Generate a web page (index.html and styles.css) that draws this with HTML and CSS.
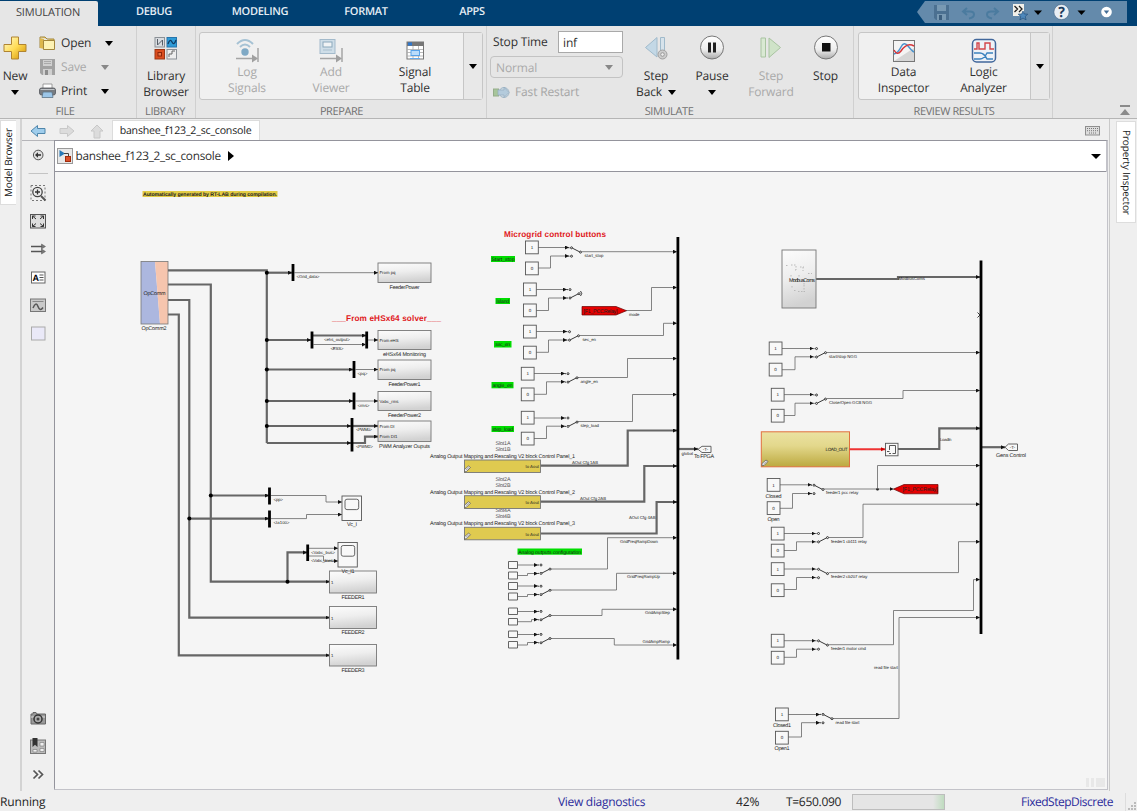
FILE: index.html
```html
<!DOCTYPE html>
<html lang="en">
<head>
<meta charset="utf-8">
<title>banshee_f123_2_sc_console</title>
<link rel="stylesheet" href="styles.css">
</head>
<body>
<div class="app">
<header class="tabs">
  <div class="tab active">SIMULATION</div><div class="tab t-debug">DEBUG</div><div class="tab t-model">MODELING</div><div class="tab t-format">FORMAT</div><div class="tab t-apps">APPS</div>
  <svg class="quick" width="212" height="24" viewBox="917 0 212 24">
    <path d="M917 12 925 1H1127V23H925Z" fill="#648aab"/>
    <path d="M934 5h15v15h-13l-2-2z" fill="#4b7091"/><path d="M937 5h9v6h-9zM937 14h9v6h-9z" fill="#7899b3"/><path d="M939 15h3v5h-3z" fill="#3b5e7e"/>
    <path d="M967 8l-4 3.500 4 3.500M963 11.500h7q4 0 4 3t-5 4" fill="none" stroke="#4b7b9f" stroke-width="2"/>
    <path d="M994 8l4 3.500-4 3.500M998 11.500h-7q-4 0-4 3t5 4" fill="none" stroke="#4b7b9f" stroke-width="2"/>
    <path d="M1013 4h11v12h-11z" fill="#f2f1ea"/><path d="M1014.500 6l3 3-3 3M1019 6l3 3-3 3" fill="none" stroke="#222" stroke-width="1.300"/><path d="M1023 11l1.300 3 3.500.2-2.600 2.200.9 3.500-3.100-1.900-3.100 1.900.9-3.500-2.600-2.200 3.500-.2z" fill="#4e88bb" stroke="#24527e" stroke-width=".7"/>
    <path d="M1034 10.500h8l-4 4.500z" fill="#000"/>
    <circle cx="1061.500" cy="12" r="7.600" fill="#e9eef4" stroke="#38597a" stroke-width=".5"/><text x="1061.500" y="17" class="help">?</text>
    <path d="M1077.500 10.500h8l-4 4.500z" fill="#000"/>
    <circle cx="1106.500" cy="12" r="5.300" fill="#fff"/><path d="M1103.800 10.500h5.400l-2.700 3.500z" fill="#426d96"/>
  </svg>
</header>

<section class="ribbon">
  <div class="group g-file">
    <div class="content">
      <div class="big new">
        <svg width="24" height="26" viewBox="0 0 24 26"><defs><linearGradient id="gold" x2="1" y2="1"><stop stop-color="#fffbd1"/><stop offset=".5" stop-color="#ffdc55"/><stop offset="1" stop-color="#d08c00"/></linearGradient></defs><path d="M8.500 2h7v7.500H23v7h-7.500V24h-7v-7.500H1v-7h7.500z" fill="url(#gold)" stroke="#b08431"/></svg>
        <span class="lbl-new">New</span><i class="caret"></i>
      </div>
      <div class="rows">
        <div class="row"><svg width="17" height="16" viewBox="0 0 17 16"><path d="M1 2h5l2 2h7v2M1 2v11" fill="#e8c964" stroke="#a3873d"/><path d="M1 3l4 1v10l-4-1z" fill="#dcb64b"/><path d="M4.500 5.500h11v9h-11z" fill="#fdf2b4" stroke="#a3873d"/></svg><span>Open</span><i class="caret open"></i></div>
        <div class="row off"><svg width="17" height="16" viewBox="0 0 17 16"><path d="M1 0h15v16H3l-2-2z" fill="#a2a2a2"/><path d="M4 1h9v6H4zM4 10h9v6H4z" fill="#d0d0d0"/><path d="M5 2.500h7M5 4.500h7" stroke="#aaa"/><path d="M6 11h3v5H6z" fill="#8c8c8c"/></svg><span>Save</span><i class="caret"></i></div>
        <div class="row"><svg width="17" height="16" viewBox="0 0 17 16"><path d="M4 1h9v5H4z" fill="#fff" stroke="#888" stroke-width=".8"/><rect x=".5" y="5" width="16" height="7" rx="2" fill="#787c81" stroke="#53575c" stroke-width=".8"/><path d="M1.500 6.500h14" stroke="#c1c5c9"/><path d="M4 9h9l1 5.500H3z" fill="#9cc6e8" stroke="#5d7386" stroke-width=".8"/></svg><span>Print</span><i class="caret"></i></div>
      </div>
    </div>
    <div class="gname">FILE</div>
  </div>
  <div class="group g-lib">
    <div class="content">
      <div class="big">
        <svg width="24" height="26" viewBox="0 0 24 26"><rect x="1" y="2.500" width="9.500" height="9.500" fill="#d9dce0" stroke="#8c9197"/><path d="M3.500 4v6l5-5v5.500" fill="none" stroke="#565d66"/><rect x="13" y="2.500" width="9.500" height="9.500" fill="#2f9bd7" stroke="#2675ac"/><path d="M14 9q2-6 4-2t4-2" fill="none" stroke="#103c63" stroke-width="1.300"/><rect x="1" y="14.500" width="9.500" height="9.500" fill="#db4c1e" stroke="#9c3615"/><rect x="4" y="17.500" width="3.500" height="3.500" fill="#e9794c" stroke="#8c2408"/><rect x="13" y="14.500" width="9.500" height="9.500" fill="#eee" stroke="#8c9197"/><path d="M15 22v-3h3v-3h3" fill="none" stroke="#666"/></svg>
        <span>Library</span><span>Browser</span>
      </div>
    </div>
    <div class="gname">LIBRARY</div>
  </div>
  <div class="group g-prep">
    <div class="content">
      <div class="gallery">
        <div class="item w96 off"><svg width="24" height="25" viewBox="0 0 24 25"><path d="M2 6q8-8 16 0M5 9q5-5 10 0" fill="none" stroke="#a6c2d4" stroke-width="2"/><circle cx="10" cy="14" r="3.700" fill="#7fa9c5"/><path d="M1 20.500h17M23 10v14" stroke="#a5a5a5" stroke-width="1.500"/><path d="M17 16.500v8l6-4z" fill="#a0a0a0"/></svg><span>Log</span><span>Signals</span></div>
        <div class="item w72 off"><svg width="24" height="25" viewBox="0 0 24 25"><rect x="1" y="1.500" width="15" height="14" fill="#cfdee8" stroke="#a3bacb"/><rect x="4" y="4" width="9" height="5" fill="#f0f3f5" stroke="#8ba8bb"/><path d="M4 12h9" stroke="#a9bfce"/><path d="M1 20.500h17M23 10v14" stroke="#a5a5a5" stroke-width="1.500"/><path d="M17 16.500v8l6-4z" fill="#a0a0a0"/></svg><span>Add</span><span>Viewer</span></div>
        <div class="item w95"><svg width="24" height="25" viewBox="0 0 24 25"><rect x="4" y="4" width="16.500" height="17" fill="#fff" stroke="#777"/><path d="M4 4h16.500v4H4z" fill="#777"/><path d="M5 4.500h4v3H5z" fill="#2d77cf"/><path d="M4 11.500h16M4 14.500h16M4 18h16M10 8v13M15.500 8v13" stroke="#aaa" stroke-width=".8"/><rect x="8" y="12.500" width="8.500" height="5" fill="#b9dcfb" stroke="#57a2e8"/><path d="M7 20.500h10" stroke="#62a9eb"/></svg><span>Signal</span><span>Table</span></div>
        <div class="more"><i class="caret"></i></div>
      </div>
    </div>
    <div class="gname">PREPARE</div>
  </div>
  <div class="group g-sim">
    <div class="content">
      <div class="simform">
        <div class="stop"><span>Stop Time</span><div class="field">inf</div></div>
        <div class="select"><span>Normal</span><i class="caret"></i></div>
        <div class="fast"><svg width="17" height="14" viewBox="0 0 17 14"><rect x=".5" y="4" width="5" height="7" fill="#a7c59b" stroke="#95ad8a"/><ellipse cx="11" cy="7.500" rx="5" ry="5" fill="#cddbe4" stroke="#a3b8c8"/><path d="M5 5h6V2l5 5.500-5 5V10H5z" fill="#b4cbdc" stroke="#96adc0" stroke-width=".7"/></svg><span>Fast Restart</span></div>
      </div>
      <div class="big sb"><svg width="26" height="26" viewBox="0 0 26 26"><path d="M14 2.500V22L2.500 12.500z" fill="#c3d8e6" stroke="#a0bacb"/><path d="M17.500 2.500h4V20h-4z" fill="#d7e3eb" stroke="#a0bacb"/><circle cx="19.500" cy="19.500" r="4.500" fill="#ccc" stroke="#a0a0a0"/><circle cx="19.500" cy="19.500" r="1.800" fill="#eee" stroke="#999"/></svg><span>Step</span><span>Back <i class="caret"></i></span></div>
      <div class="big pa"><svg width="26" height="26" viewBox="0 0 26 26"><defs><linearGradient id="btn" x2="0" y2="1"><stop stop-color="#fff"/><stop offset=".6" stop-color="#ededed"/><stop offset="1" stop-color="#aaa"/></linearGradient></defs><circle cx="13" cy="12.500" r="11.500" fill="url(#btn)" stroke="#777"/><path d="M9 7.500h3v10H9zM14 7.500h3v10h-3z" fill="#222"/></svg><span>Pause</span><i class="caret c2"></i></div>
      <div class="big sf off"><svg width="26" height="26" viewBox="0 0 26 26"><path d="M3 3h4.500v19H3z" fill="#d9e9d3" stroke="#a9c4a1"/><path d="M11 3v19.500l11.500-10z" fill="#cfe3c8" stroke="#a9c4a1"/></svg><span>Step</span><span>Forward</span></div>
      <div class="big st"><svg width="26" height="26" viewBox="0 0 26 26"><circle cx="13" cy="12.500" r="11.500" fill="url(#btn)" stroke="#777"/><path d="M9 8h8.500v8.500H9z" fill="#111"/></svg><span>Stop</span></div>
    </div>
    <div class="gname">SIMULATE</div>
  </div>
  <div class="group g-rev">
    <div class="content">
      <div class="gallery">
        <div class="item w90"><svg width="24" height="25" viewBox="0 0 24 25"><rect x="1.500" y="2.500" width="21" height="21" fill="#f4f4f4" stroke="#777"/><path d="M2 23l20-13v13z" fill="#d6d6d6"/><path d="M2 16q4-1 7-7t7-1 6 6" fill="none" stroke="#4b93cd" stroke-width="1.500"/><path d="M2 12q3 6 7 1 6-9 13-5" fill="none" stroke="#d5363a" stroke-width="1.500"/></svg><span>Data</span><span>Inspector</span></div>
        <div class="item w70"><svg width="26" height="25" viewBox="0 0 26 25"><rect x="1.500" y="1.500" width="23" height="22.500" rx="4" fill="#eef2f7" stroke="#41679b" stroke-width="1.500"/><path d="M3 11h3V5h2v6h6V5h5v6h4" fill="none" stroke="#d2454a" stroke-width="1.400"/><path d="M3 15h6q4 0 7 6h6M3 21h6q4 0 7-6h6" fill="none" stroke="#3b83bf" stroke-width="1.400"/></svg><span>Logic</span><span>Analyzer</span></div>
        <div class="more"><i class="caret"></i></div>
      </div>
    </div>
    <div class="gname">REVIEW RESULTS</div>
  </div>
  <div class="collapse"><svg width="12" height="12" viewBox="0 0 12 12"><path d="M1 1h10v2H1zM6 5l5 6H1z" fill="#8b8b8b"/></svg></div>
</section>

<main class="body">
  <aside class="left"><div class="vtab"><span>Model Browser</span></div></aside>
  <div class="center">
    <div class="doctabs">
      <svg width="84" height="21" viewBox="28 119 84 21"><path d="M31 131l6.500-5.500v3H45v5h-7.500v3z" fill="#9fcdec" stroke="#4f86ab"/><path d="M74 131l-6.500-5.500v3H60v5h7.500v3z" fill="#dcdcdc" stroke="#c8c8c8"/><path d="M97 125l-6 6h3v7h6v-7h3z" fill="#dcdcdc" stroke="#c8c8c8"/></svg>
      <div class="doctab">banshee_f123_2_sc_console</div>
      <svg class="kbd" width="15" height="10" viewBox="0 0 15 10"><rect x=".5" y=".5" width="14" height="8.500" fill="#ddd" stroke="#8f8f8f"/><path d="M2 2.500h11M2 4.700h11M4 7h7" stroke="#777" stroke-dasharray="1 1"/></svg>
    </div>
    <div class="work">
      <nav class="palette">
        <svg width="32" height="648" viewBox="22 141 32 648">
          <circle cx="38.200" cy="155" r="4.800" fill="#e0e0e0" stroke="#555"/><path d="M41 155h-4" stroke="#333" stroke-width="1.600"/><path d="M38 152.300v5.400l-3-2.700z" fill="#333"/>
          <path d="M28.500 173.500H48" stroke="#c4c4c4"/>
          <rect x="31" y="185.500" width="14" height="15" fill="none" stroke="#777" stroke-dasharray="2 2"/><circle cx="37.500" cy="192" r="4.700" fill="#eee" stroke="#444" stroke-width="1.300"/><path d="M35 192h5M37.500 189.500v5" stroke="#333" stroke-width="1.300"/><path d="M41 196l4.500 4.500" stroke="#555" stroke-width="2"/>
          <rect x="30.500" y="214.500" width="15" height="13.500" fill="#dedede" stroke="#555"/><path d="M32.500 219v-3h3M32.500 216l3.500 3M43.500 219v-3h-3M43.500 216l-3.500 3M32.500 223.500v3h3M32.500 226.500l3.500-3M43.500 223.500v3h-3M43.500 226.500l-3.500-3" fill="none" stroke="#333"/>
          <path d="M31 246.500h12M31 251.500h12" stroke="#555" stroke-width="1.300"/><path d="M41.500 244l4 2.500-4 2.500zM41.500 249l4 2.500-4 2.500z" fill="#777" stroke="#555" stroke-width=".5"/>
          <rect x="31.500" y="272" width="13.500" height="11" fill="#fff" stroke="#666"/><text x="32.500" y="281" class="ia">A</text><path d="M39.500 275h4M39.500 277.500h4M39.500 280h4" stroke="#555"/>
          <rect x="30.500" y="299" width="15" height="12.500" fill="#c9c9c9" stroke="#777"/><path d="M32.500 301.500h11" stroke="#888"/><path d="M33 308q3-7 5-1.500t5 1" fill="none" stroke="#555" stroke-width="1.500"/>
          <rect x="31.500" y="327" width="13.500" height="13" fill="#eae9f8" stroke="#aaa"/>
          <path d="M31 714h2v-1.500h3l1 1.500h8.500v10H31z" fill="#999" stroke="#666"/><path d="M31 717h14" stroke="#ddd"/><circle cx="38" cy="719" r="4" fill="#aaa" stroke="#333" stroke-width="1.500"/><circle cx="38" cy="719" r="1.500" fill="#444"/>
          <rect x="30.500" y="740" width="15" height="13.500" fill="#bbb" stroke="#777"/><path d="M40 742.500h4v3.500h-4zM40 748.500h4v3h-4zM33 749.500h4v2.500h-4z" fill="#eee" stroke="#777" stroke-width=".6"/><path d="M32.500 738h5v9l-2.500-2.300-2.500 2.300z" fill="#333"/>
          <path d="M33.500 770.500l4 4-4 4M38.500 770.500l4 4-4 4" fill="none" stroke="#555" stroke-width="1.700"/>
        </svg>
      </nav>
      <div class="editor">
        <div class="crumb"><svg width="16" height="16" viewBox="0 0 16 16"><rect x=".5" y=".5" width="15" height="15" fill="#e9e9e9" stroke="#999"/><path d="M2.500 2v7l5.500-3.500z" fill="#2679b7"/><path d="M7 5.500h4.500V9" fill="none" stroke="#444"/><rect x="8.500" y="8.500" width="5" height="5" fill="#d9502a" stroke="#a02c0d"/></svg><span>banshee_f123_2_sc_console</span><svg width="6" height="10" viewBox="0 0 6 10"><path d="M0 0l6 5-6 5z"/></svg><i class="caret wide"></i></div>
        <svg class="canvas" width="1052" height="617" viewBox="55 172 1052 617">
          <defs>
            <marker id="a" markerUnits="userSpaceOnUse" markerWidth="5" markerHeight="5" refX="4" refY="2" orient="auto"><path d="M0 0l4 2-4 2z" fill="#111"/></marker>
            <marker id="ar" markerUnits="userSpaceOnUse" markerWidth="5" markerHeight="5" refX="4" refY="2" orient="auto"><path d="M0 0l4 2-4 2z" fill="#c00"/></marker>
            <linearGradient id="blk" x2=".2" y2="1"><stop stop-color="#fcfcfc"/><stop offset=".5" stop-color="#eee"/><stop offset="1" stop-color="#d2d2d2"/></linearGradient>
            <linearGradient id="yel" x2="0" y2="1"><stop stop-color="#ebe2a2"/><stop offset=".4" stop-color="#e3d88c"/><stop offset="1" stop-color="#bca93f"/></linearGradient>
            <g id="c1"><rect width="12.800" height="12.800" class="k"/><text x="6.400" y="8" class="n">1</text></g>
            <g id="c0"><rect width="12.800" height="12.800" class="k"/><text x="6.400" y="8" class="n">0</text></g>
            <g id="su" class="s"><path d="M-3 0h1M-3 8.400h1M1 .4L8 4"/><circle r="1"/><circle cy="8.400" r="1"/><circle cx="9" cy="4.300" r="1"/></g>
            <g id="sd" class="s"><path d="M-3 0h1M-3 8.400h1M1 8L8 4.400"/><circle r="1"/><circle cy="8.400" r="1"/><circle cx="9" cy="4.100" r="1"/></g>
            <g id="pen"><path d="M0 3.500L4 0l2 1.500-4 4-2 .3z" fill="#eee" stroke="#555" stroke-width=".7"/><path d="M1.500 4l3-2.500" stroke="#777" stroke-width=".6"/></g>
          </defs>

          <rect x="142.500" y="191" width="135" height="6" fill="#e3cc45"/>
          <text x="143" y="196" textLength="134" class="b">Automatically generated by RT-LAB during compilation.</text>

          <path d="M141 261.500h14l5 62.500h-19z" fill="#acb7df"/><path d="M155 261.500h13V324h-8z" fill="#f6c5ae"/><rect x="141" y="261.500" width="27" height="62.500" fill="none" stroke="#777" stroke-width=".8"/>
          <text x="154.500" y="295" textLength="22" class="m">OpComm</text><text x="154" y="330" textLength="25" class="m">OpComm2</text>

          <g class="bus">
            <path d="M168 270.300H266.800V443"/>
            <path class="e" d="M266.800 272.700H292"/><path class="e" d="M266.800 340H311"/><path class="e" d="M266.800 369.500H353"/><path class="e" d="M266.800 401H353"/><path class="e" d="M266.800 426H351"/><path class="e" d="M266.800 443H351"/>
            <path class="e" d="M168 284.500H210.800V581.700H329.500"/><path class="e" d="M168 300H189.300V617.600H329.500"/><path class="e" d="M168 314.500H178.800V655.300H329.500"/>
            <path class="e" d="M210.800 495.500H269"/><path class="e" d="M189.300 518.600H269"/><path class="e" d="M287.500 581.700V552.400H307"/>
            <path class="e" d="M313 335.500H366"/><path class="e" d="M353 426H378"/><path class="e" d="M353 443H365V436.600H378"/>
            <path class="e" d="M540.500 465.700H627.700V430.500H677"/><path class="e" d="M540.500 501.700H644.300V466H677"/><path class="e" d="M540.500 533.500H656.600V502H677"/><path class="e" d="M679 449H698"/>
            <path class="e" d="M816 279H898V277H980"/><path class="e" d="M898 449H939.300V428.300H980"/><path class="e" d="M982 447.200H1005"/>
          </g>
          <g class="dot"><circle cx="266.800" cy="272.700" r="2"/><circle cx="266.800" cy="340" r="2"/><circle cx="266.800" cy="369.500" r="2"/><circle cx="266.800" cy="401" r="2"/><circle cx="266.800" cy="426" r="2"/><circle cx="210.800" cy="495.500" r="2"/><circle cx="189.300" cy="518.600" r="2"/><circle cx="287.500" cy="581.700" r="2"/><circle cx="877.500" cy="489.200" r="1.300"/></g>
          <path class="bar" d="M293 264v17M312 331.500v17M366.700 331.500v17M354 361v17M354 392.500v17M352 418v33.500M269.500 487.500v17M269.500 510.500v17M307.700 544.500v16.500M677.900 237v422.500M981 260.500V634"/>

          <g class="blk"><rect x="378" y="263" width="53" height="19.500"/><rect x="378" y="330.500" width="53" height="19"/><rect x="378" y="360" width="53" height="19.500"/><rect x="378" y="391.500" width="53" height="19"/><rect x="378" y="421" width="53" height="20.500"/><rect x="329.500" y="571" width="47" height="22"/><rect x="329.500" y="606.500" width="47" height="22"/><rect x="329.500" y="644.500" width="47" height="21.500"/><rect x="782" y="250" width="34" height="58"/></g>
          <path d="M786 265.500h2M791 265h5v5M803 267v4M800 267h4M808 273.500h4M795 270h1M799 275v2M791 275v2M804 280v5M795 279v3M792 286v2M804 285v7M794 290.500h3M798 291.500h7" fill="none" stroke="#b4b4b4" stroke-width=".9" stroke-dasharray="1.500 1.500"/>

          <g class="w">
            <path d="M294 272.700H378"/><path d="M313 344.500H366"/><path d="M368 340H378"/><path d="M355 369.500H378"/><path d="M355 401H378"/>
            <path d="M271 495.500H326V502H342"/><path d="M271 518.600H306.500V514.500H342"/><path d="M309 548.300H338"/><path d="M309 556H323.500V561H338"/>
            <path d="M538 247.500H569"/><path d="M538 268H550.500V256H569"/><path d="M582 251.700H677"/>
            <path d="M536 289.500H567"/><path d="M536 310.500H548.500V298H567"/><path d="M626 310.500H651.500V287.500H677"/>
            <path d="M536 331.500H567"/><path d="M536 352.300H548.500V340H567"/><path d="M580 335.500H663.500V323.300H677"/>
            <path d="M534 373.500H565"/><path d="M534 394.300H546.500V381.800H565"/><path d="M578 377.500H627.500V358.500H677"/>
            <path d="M534 418H565"/><path d="M534 438.500H546.500V426.200H565"/><path d="M578 421.500H632.500V394.500H677"/>
            <path d="M517.500 565H538"/><path d="M517.500 575.500H527.500V573.500H538"/><path d="M551 569H607.500V537.700H677"/>
            <path d="M517.500 586H538"/><path d="M517.500 596.500H527.500V594.500H538"/><path d="M551 590H616.500V573.300H677"/>
            <path d="M517.500 611.500H538"/><path d="M517.500 621.700H531.500V619.600H538"/><path d="M551 615.500H602V609.300H677"/>
            <path d="M517.500 634.500H538"/><path d="M517.500 645H527.500V642.500H538"/><path d="M551 638.500H614.300V645H677"/>
            <path d="M782 348.500H813.500"/><path d="M782 369.700H795V356.800H813.500"/><path d="M827 352.500H980"/>
            <path d="M784 394.600H813.500"/><path d="M784 415.500H795V403.200H813.500"/><path d="M827 398.500H903V390.500H980"/>
            <path d="M780 484.800H811.500"/><path d="M780 508.300H792.500V493.500H811.500"/><path d="M824 489H893.500"/><path d="M877.500 489V465.500H980"/>
            <path d="M784 533.500H815.500"/><path d="M784 550.500H796.500V541.800H815.500"/><path d="M829 537.500H863V504.200H980"/>
            <path d="M784 569H815.500"/><path d="M784 589.500H796.500V577.500H815.500"/><path d="M829 572.600H958.500V541.700H980"/>
            <path d="M784 640.700H815.500"/><path d="M784 657.300H796.500V649.200H815.500"/><path d="M829 644.700H893.500V610.500H973.500V579.600H980"/>
            <path d="M788 714.500H820"/><path d="M788 737H801.500V722.700H820"/><path d="M833 718.500H899V617.500H980"/>
          </g>

          <use href="#c1" x="525.500" y="241"/><use href="#c0" x="525.500" y="262"/><use href="#c1" x="523.500" y="283"/><use href="#c0" x="523.500" y="304"/><use href="#c1" x="523.500" y="325.200"/><use href="#c0" x="523.500" y="346.200"/><use href="#c1" x="521.300" y="367.300"/><use href="#c0" x="521.300" y="388"/><use href="#c1" x="521.300" y="411.300"/><use href="#c0" x="521.300" y="432.200"/>
          <use href="#c1" x="769.200" y="342"/><use href="#c0" x="769.200" y="363.200"/><use href="#c1" x="771.300" y="388.300"/><use href="#c0" x="771.300" y="409.300"/><use href="#c1" x="767.200" y="478.500"/><use href="#c0" x="767.200" y="501.700"/><use href="#c1" x="771.300" y="527.200"/><use href="#c0" x="771.300" y="544.200"/><use href="#c1" x="771.300" y="562.700"/><use href="#c0" x="771.300" y="583.800"/><use href="#c1" x="771.300" y="634.300"/><use href="#c0" x="771.300" y="651.300"/><use href="#c1" x="775.500" y="708"/><use href="#c0" x="775.500" y="731.300"/>
          <path class="k" d="M508.500 561.500h9v7h-9zM508.500 572h9v7h-9zM508.500 582.500h9v7h-9zM508.500 593h9v7h-9zM508.500 608h9v6.500h-9zM508.500 618.500h9v6.500h-9zM508.500 631h9v6.500h-9zM508.500 641.500h9v6.500h-9z"/>
          <use href="#su" x="571.500" y="247.800"/><use href="#sd" x="570" y="289.600"/><use href="#sd" x="569.500" y="331.700"/><use href="#sd" x="568" y="373.700"/><use href="#sd" x="568" y="418"/>
          <use href="#sd" x="541" y="565"/><use href="#sd" x="541" y="586.200"/><use href="#sd" x="541" y="611.400"/><use href="#sd" x="541" y="634.400"/>
          <use href="#sd" x="816.500" y="348.600"/><use href="#sd" x="816.500" y="395"/><use href="#su" x="814" y="485.200"/><use href="#sd" x="818.500" y="533.500"/><use href="#su" x="818.500" y="569.300"/><use href="#su" x="818.500" y="640.800"/><use href="#su" x="823" y="714.400"/>
          <path class="s" d="M580.500 291q2.500 2.500 0 5M977.500 312.500l2.500 2.500-2.500 2.500"/>

          <text x="332" y="320.500" textLength="109" class="h">___From eHSx64 solver___</text><text x="504" y="236.500" textLength="102" class="h">Microgrid control buttons</text>

          <g class="p"><text x="379.500" y="274.300" textLength="16">From pq</text><text x="379.500" y="341.500" textLength="19">From eHS</text><text x="379.500" y="371.300" textLength="16">From pq</text><text x="379.500" y="403" textLength="19">Vabc_rms</text><text x="379.500" y="427.700" textLength="15">From DI</text><text x="379.500" y="438" textLength="18">From DI1</text><text x="331" y="583.500">1</text><text x="331" y="619.500">1</text><text x="331" y="657">1</text>
            <text x="296.500" y="277.500" textLength="23">&lt;Grid_data&gt;</text><text x="324" y="341" textLength="26">&lt;ehs_output&gt;</text><text x="330.500" y="349.500" textLength="13">&lt;ESS&gt;</text><text x="357.500" y="375" textLength="10">&lt;pq&gt;</text><text x="357.500" y="406.500" textLength="12">&lt;rms&gt;</text><text x="356" y="431" textLength="16">&lt;PWM0&gt;</text><text x="356" y="448" textLength="17">&lt;PWM2&gt;</text>
            <text x="273.500" y="501" textLength="9.500">&lt;pp&gt;</text><text x="273.500" y="524" textLength="16">&lt;Ia100&gt;</text><text x="311" y="553.700" textLength="24">&lt;Vabc_bus&gt;</text><text x="311" y="561.500" textLength="24">&lt;Vabc_lines&gt;</text>
            <text x="584.500" y="256.500" textLength="19">start_stop</text><text x="629" y="315.800" textLength="10.500">mode</text><text x="582.500" y="340.500" textLength="13.500">sec_en</text><text x="580.500" y="383.300" textLength="17.500">angle_en</text><text x="580.500" y="427.300" textLength="18.500">step_load</text>
            <text x="572" y="464" textLength="26">AOut Cfg 1AB</text><text x="580" y="500" textLength="26">AOut Cfg 2AB</text><text x="629" y="519.300" textLength="26.500">AOut Cfg 4AB</text><text x="620" y="543" textLength="38">GridFreqRampDown</text><text x="627" y="578.300" textLength="33">GridFreqRampUp</text><text x="645" y="614.300" textLength="25">GridAmpStep</text><text x="642.500" y="643" textLength="27.500">GridAmpRamp</text><text x="681.500" y="454.500" textLength="11.500">global</text>
            <text x="898.500" y="279.800" textLength="26.500">ModbusComs</text><text x="829" y="357.500" textLength="28">start/stop NGG</text><text x="829" y="403.700" textLength="43">Close/Open GCB NGG</text><text x="940" y="440.800" textLength="11.500">LoadIn</text><text x="826" y="494.300" textLength="32.500">feeder1 pcc relay</text><text x="831" y="543" textLength="36">feeder1 cb111 relay</text><text x="831" y="578.300" textLength="36.500">feeder2 cb207 relay</text><text x="831" y="650.300" textLength="35">feeder1 motor cmd</text><text x="874" y="669.300" textLength="24">read file start</text><text x="835.500" y="723.800" textLength="24">read file start</text></g>

          <g class="m"><text x="404.500" y="289" textLength="30">FeederPower</text><text x="404.500" y="355.800" textLength="43">eHSx64 Monitoring</text><text x="404.500" y="385.500" textLength="32">FeederPower1</text><text x="404.500" y="416.700" textLength="33">FeederPower2</text><text x="404.500" y="448" textLength="51">PWM Analyzer Ouputs</text><text x="352" y="526.300" textLength="10">Vc_I</text><text x="348" y="572.700" textLength="13">Vc_I1</text><text x="353" y="599.200" textLength="23">FEEDER1</text><text x="353" y="634.300" textLength="23">FEEDER2</text><text x="353" y="672" textLength="23">FEEDER3</text>
            <text x="502.500" y="457.500" textLength="145">Analog Output Mapping and Rescaling V2 block Control Panel_1</text><text x="502.500" y="493.500" textLength="145">Analog Output Mapping and Rescaling V2 block Control Panel_2</text><text x="502.500" y="525" textLength="145">Analog Output Mapping and Rescaling V2 block Control Panel_3</text>
            <text x="704" y="458.300" textLength="20">To FPGA</text><text x="1011" y="457" textLength="30">Gens Control</text><text x="802" y="281.800" textLength="26">ModbusComs</text><text x="773.500" y="497.500" textLength="16">Closed</text><text x="773.500" y="520.500" textLength="12">Open</text><text x="782" y="727.300" textLength="18">Closed1</text><text x="782" y="749.500" textLength="15">Open1</text></g>
          <g class="m slot"><text x="503" y="444.800" textLength="15">Slot1A</text><text x="503" y="451" textLength="15">Slot1B</text><text x="503" y="480.700" textLength="15">Slot2A</text><text x="503" y="486.500" textLength="15">Slot2B</text><text x="503" y="512" textLength="15">Slot4A</text><text x="503" y="518.300" textLength="15">Slot4B</text></g>

          <g class="scope"><rect x="342" y="496" width="19.500" height="24.500"/><rect x="345" y="499.200" width="13.700" height="10.400" rx="2"/><rect x="338" y="542.500" width="19.300" height="24.500"/><rect x="341.200" y="545.500" width="13.500" height="10.700" rx="2"/></g>

          <g class="yb"><rect x="464.500" y="460" width="76" height="12.500"/><rect x="464.500" y="495.700" width="76" height="12.800"/><rect x="464.500" y="527.300" width="76" height="12.500"/></g>
          <g class="p"><text x="525.500" y="468.200" textLength="13.500">to Aout</text><text x="525.500" y="504" textLength="13.500">to Aout</text><text x="525.500" y="535.500" textLength="13.500">to Aout</text></g>
          <rect x="761.300" y="431.800" width="88.200" height="35" fill="url(#yel)" stroke="#e0703f"/><text x="836.500" y="451.300" textLength="22" class="lo">LOAD_OUT</text>
          <use href="#pen" x="464.500" y="466"/><use href="#pen" x="464.500" y="501.700"/><use href="#pen" x="464.500" y="533.200"/><use href="#pen" x="762" y="460"/>
          <path d="M849.500 449.300H885" stroke="#e33" stroke-width="2" marker-end="url(#ar)"/>
          <rect x="885.500" y="443.300" width="12.500" height="12.500" class="k"/><path d="M887 451.500h2.500M889.500 450v-4.500h6v8h-3M891 453.500h-2" fill="none" stroke="#444" stroke-width=".9"/>

          <g fill="#0d0"><rect x="491" y="256" width="24" height="6"/><rect x="495.500" y="298" width="14.500" height="6"/><rect x="494" y="341" width="17.500" height="6.500"/><rect x="491.500" y="382" width="22" height="6.300"/><rect x="491.500" y="426" width="22.500" height="6"/><rect x="517.500" y="548.500" width="64.500" height="6.200"/></g>
          <g class="g"><text x="503" y="260.800" textLength="23">Start_stop</text><text x="502.700" y="302.800" textLength="13">Island</text><text x="502.700" y="346" textLength="15">sec_en</text><text x="502.500" y="386.700" textLength="20">angle_en</text><text x="502.700" y="430.600" textLength="21">step_load</text><text x="549.700" y="553.500" textLength="63">Analog outputs configuration</text></g>

          <path d="M582 306.500h34l10.500 4.200-10.500 4.300h-34zM938 484.500h-34l-10.500 4.600 10.500 4.700h34z" fill="#e60000" stroke="#600" stroke-width=".7"/>
          <text x="600.500" y="312.500" textLength="34" class="m">[F1_PCCRelay]</text><text x="920" y="491" textLength="35" class="m">[F1_PCCRelay]</text>
          <path class="k" d="M711 446.300h-9l-4 3 4 3.200h9zM1017.500 444h-9l-3.500 3.200 3.500 3.300h9z"/><text x="705.500" y="451" class="n">-T-</text><text x="1012.500" y="449" class="n">-T-</text>
          <path d="M1086 778h3v9h-3zM1091 778h3v9h-3zM1096 778h9v9h-9z" fill="#e8e8e8"/>
        </svg>
      </div>
    </div>
  </div>
  <aside class="right"><div class="vtab"><span>Property Inspector</span></div></aside>
</main>

<footer class="status">
  <span class="s-run">Running</span><span class="s-diag link">View diagnostics</span><span class="s-pct">42%</span><span class="s-time">T=650.090</span><div class="progress"></div><span class="s-solver link">FixedStepDiscrete</span>
  <svg class="grip" width="12" height="18" viewBox="0 0 12 18"><path d="M.5 0v18" stroke="#ddd"/><path d="M9 9h2v2H9zM9 12h2v2H9zM6 12h2v2H6zM9 15h2v2H9zM6 15h2v2H6zM3 15h2v2H3z" fill="#bbb"/></svg>
</footer>
</div>
</body>
</html>
```

FILE: styles.css
```css
* { box-sizing: border-box; }
body { margin: 0; font: 12px/16px "Open Sans", "Noto Sans", sans-serif; letter-spacing: -.15px; color: #303030; background: #efefef; overflow: hidden; text-rendering: geometricPrecision; }
svg { display: block; flex: none; }
.app { width: 1137px; height: 811px; display: flex; flex-direction: column; }

.tabs { height: 26px; flex: none; display: flex; background: #004072; color: #e6eef5; font-size: 11px; line-height: 24px; white-space: nowrap; }
.tab { text-align: center; font-weight: 600; letter-spacing: -.3px; }
.tab.active { width: 98px; height: 25px; margin-top: 1px; background: #e6e6e6; color: #404040; font-weight: 400; border-top-right-radius: 2px; padding-right: 2px; letter-spacing: -.15px; }
.t-debug { width: 112px; }
.t-model { width: 100px; }
.t-format { width: 112px; }
.t-apps { width: 100px; }
.quick { margin-left: auto; margin-right: 8px; }
.help { font: bold 14px "Open Sans", sans-serif; text-anchor: middle; fill: #1b3a5c; }

.ribbon { height: 93px; flex: none; display: flex; background: #e6e6e6; border-bottom: 1px solid #b5b5b5; white-space: nowrap; }
.group { display: flex; flex-direction: column; position: relative; border-right: 1px solid #d0d0d0; }
.content { height: 78px; display: flex; }
.gname { text-align: center; font-size: 11px; line-height: 16px; height: 14px; color: #707070; letter-spacing: -.4px; padding-right: 2px; }
.g-file { width: 137px; }
.g-file .gname { padding-right: 6px; }
.g-lib { width: 59px; }
.g-prep { width: 291px; padding-left: 3px; }
.g-sim { width: 367px; }
.g-rev { width: 199px; padding-left: 4px; }
.off { color: #a9a9a9; }
.caret { display: inline-block; width: 0; height: 0; flex: none; border: 4px solid transparent; border-top: 5px solid #000; border-bottom: 0; }
.off .caret, .select .caret { border-top-color: #888; }
.big { display: flex; flex-direction: column; align-items: center; padding-top: 9px; width: 58px; line-height: 16px; }
.big svg { margin-bottom: 7px; }
.big .caret { margin-left: 3px; vertical-align: 1px; }
.big .c2 { margin: 6px 0 0; }
.new { width: 31px; padding-right: 1px; }
.new .caret { margin: 6px 0 0; }
.rows { padding: 5px 0 0 8px; }
.row { height: 24px; display: flex; align-items: center; }
.row span { width: 44px; padding-left: 5px; }
.row .caret { margin-left: 1px; }
.row .open { margin-left: 5px; }
.gallery { height: 68px; margin-top: 6px; display: flex; border: 1px solid #c6c6c6; border-radius: 3px; background: #f0f0f0; }
.item { display: flex; flex-direction: column; align-items: center; padding-top: 5px; }
.item svg { margin-bottom: 1px; }
.w96 { width: 94px; }
.w72 { width: 74px; }
.w95 { width: 94px; }
.g-prep .more { margin-left: 1px; }
.w90 { width: 89px; }
.w70 { width: 82px; padding-right: 11px; }
.more { width: 19px; border-left: 1px solid #c6c6c6; background: #e8e8e8; display: flex; align-items: center; justify-content: center; }

.simform { width: 138px; padding: 5px 2px 0 3px; }
.stop { display: flex; align-items: center; justify-content: space-between; padding-left: 3px; }
.field { width: 65px; height: 22px; background: #fff; border: 1px solid #a9a9a9; padding: 3px 4px 0; }
.select { margin-top: 3px; height: 22px; border: 1px solid #c3c3c3; border-radius: 4px; display: flex; align-items: center; justify-content: space-between; padding: 1px 9px 0 5px; color: #aaa; }
.fast { display: flex; align-items: center; gap: 5px; margin-top: 6px; padding-left: 3px; color: #a5a5a5; }
.sb { width: 62px; }
.pa { width: 50px; }
.sf { width: 68px; }
.st { width: 41px; }
.collapse { margin-left: auto; padding: 78px 6px 0 0; }

.body { height: 672px; flex: none; display: flex; }
.left { width: 22px; border-right: 2px solid #d3d3d3; padding-top: 1px; }
.vtab { width: 16px; height: 85px; background: #fff; border: 1px solid #ddd; border-left: 0; writing-mode: vertical-rl; font-size: 10px; letter-spacing: -.12px; line-height: 14px; text-align: center; color: #222; white-space: nowrap; }
.left .vtab { transform: rotate(180deg); padding-left: 2px; }
.center { width: 1086px; display: flex; flex-direction: column; }
.doctabs { height: 21px; display: flex; padding-left: 6px; }
.doctab { width: 148px; height: 20px; background: #fff; border: 1px solid #dcdcdc; border-bottom: 0; font-size: 10.6px; letter-spacing: -.2px; line-height: 20px; text-align: center; margin-top: 1px; color: #222; }
.kbd { margin: 7px 8px 0 auto; }
.work { display: flex; border-top: 1px solid #b5b5b9; height: 650px; }
.palette { width: 32px; }
.editor { width: 1054px; border: 1px solid #94949c; border-right: 2px solid #c3c3c9; border-bottom: 2px solid #c3c3c9; margin-top: -1px; }
.crumb { height: 31px; background: #fff; border-bottom: 1px solid #94949c; display: flex; align-items: center; padding: 0 5px 0 2px; }
.crumb span { padding: 0 7px 0 3px; font-size: 11.8px; letter-spacing: -.28px; }
.crumb .wide { margin-left: auto; border-width: 5px 5px 0; }
.right { width: 29px; border-left: 1px solid #c9c9c9; margin-left: 1px; padding: 2px 0 0 6px; }
.right .vtab { width: 20px; height: 102px; border: 1px solid #ddd; line-height: 17px; }

.status { height: 20px; display: flex; align-items: center; line-height: 20px; padding-top: 2px; white-space: nowrap; color: #222; font-size: 12px; }
.link { color: #2b2b9b; }
.s-run { width: 558px; }
.s-diag { width: 178px; letter-spacing: -.3px; }
.s-pct { width: 50px; }
.s-time { width: 66px; letter-spacing: -.3px; }
.progress { width: 93px; height: 16px; border: 1px solid #bdbdbd; background: linear-gradient(90deg, #e5e5e5 88%, #bfdcbf); }
.s-solver { margin-left: 76px; letter-spacing: -.5px; }
.grip { margin-left: auto; }

.canvas { background: #f5f5f5; font-family: "Liberation Sans", Arial, sans-serif; letter-spacing: 0; }
.canvas text { fill: #222; }
.ia { font: bold 9px "Liberation Sans", sans-serif; }
.h { font-weight: bold; font-size: 8.2px; }
.canvas .h { fill: #e0181c; }
.b { font-weight: bold; font-size: 5.2px; }
.m { font-size: 5.4px; text-anchor: middle; }
.lo { font-size: 4.6px; text-anchor: middle; }
.canvas .slot text { fill: #555; }
.g { font-size: 5.1px; text-anchor: middle; }
.n { font-size: 4.5px; text-anchor: middle; }
.p { font-size: 4.3px; }
.bus { fill: none; stroke: #666; stroke-width: 2.2; }
.e, .w path { marker-end: url(#a); }
.w { fill: none; stroke: #666; stroke-width: .8; }
.bar { stroke: #000; stroke-width: 2.8; }
.blk { fill: url(#blk); stroke: #777; stroke-width: .9; }
.k { fill: #f8f8f8; stroke: #555; stroke-width: .9; }
.s { fill: none; stroke: #222; stroke-width: .9; }
.scope { fill: #f8f8f8; stroke: #555; stroke-width: .9; }
.yb { fill: #dfca50; stroke: #777; stroke-width: .9; }
```
